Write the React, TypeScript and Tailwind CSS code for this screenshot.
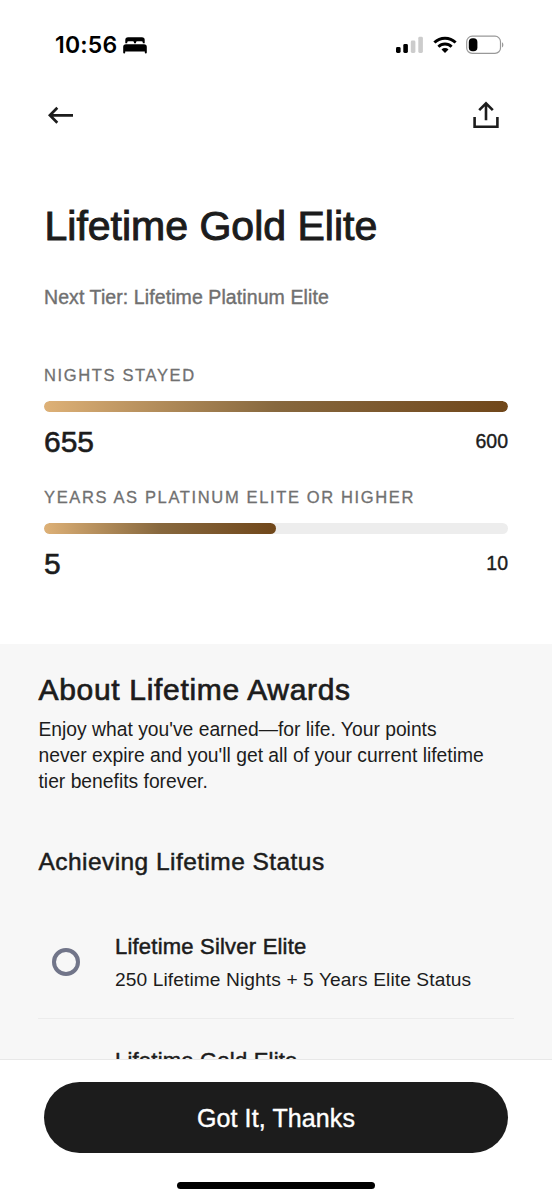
import React from 'react'

const StatusBar = () => {
  return (
    <div className="flex h-[90px] items-center justify-between pl-[55px] pr-[47px]">
      <div className="flex items-center gap-[5px] text-black">
        <span className="w-[63px] font-['Inter',sans-serif] text-[23px] leading-[26px] font-semibold tracking-[0.2px] whitespace-nowrap">10:56</span>
        <svg width="24" height="17" viewBox="0 0 24 17" fill="currentColor">
          <path d="M2.3 6.2V3A2.8 2.8 0 0 1 5.1.2h13.8A2.8 2.8 0 0 1 21.7 3v3.2h-1.900V5.600a1.400 1.400 0 0 0-1.400-1.400h-4a1.400 1.400 0 0 0-1.400 1.400v.6h-2v-.6a1.400 1.400 0 0 0-1.400-1.400h-4a1.400 1.400 0 0 0-1.400 1.400v.6z" />
          <path d="M3 7.200h18A2.800 2.800 0 0 1 23.800 10v5.500a1 1 0 0 1-2 0V14.500H2.200v1a1 1 0 0 1-2 0V10A2.800 2.800 0 0 1 3 7.200z" />
        </svg>
      </div>
      <div className="flex items-center">
        <svg width="28" height="18" viewBox="0 0 28 18">
          <rect x="0" y="11" width="4.600" height="6" rx="1.400" fill="#000" />
          <rect x="7.300" y="8" width="4.600" height="9" rx="1.400" fill="#000" />
          <rect x="14.800" y="4.500" width="4.600" height="12.500" rx="1.400" fill="#ccc" />
          <rect x="22.300" y="0.800" width="4.600" height="16.200" rx="1.400" fill="#ccc" />
        </svg>
        <svg className="ml-[9px]" width="24" height="18" viewBox="0 0 24 18" fill="none" stroke="#000">
          <path d="M1.400 6.500a15.200 15.200 0 0 1 21.200 0" strokeWidth="3" />
          <path d="M5.400 10.700a9.400 9.400 0 0 1 13.200 0" strokeWidth="2.900" />
          <path d="M12 17l-3.500-3.500a5 5 0 0 1 7 0z" fill="#000" stroke="none" />
        </svg>
        <svg className="ml-[9px]" width="39" height="20" viewBox="0 0 39 20">
          <rect x="0.700" y="1.200" width="33.800" height="17.200" rx="5.500" fill="none" stroke="#999" strokeWidth="1.200" />
          <rect x="2.800" y="3.300" width="8.600" height="13" rx="3.800" fill="#000" />
          <path d="M36 7.300c1.800.8 1.800 4.400 0 5.200z" fill="#999" />
        </svg>
      </div>
    </div>
  )
}

const NavBar = () => {
  return (
    <div className="flex h-[50px] items-center justify-between pl-12 pr-[53px] text-[#1c1c1c]">
      <button type="button" aria-label="Back">
        <svg width="26" height="18" viewBox="0 0 26 18" fill="none" stroke="currentColor" strokeWidth="2.700">
          <path d="M25 9.300H2M9.300 1.800L1.900 9.300l7.400 7.400" />
        </svg>
      </button>
      <button type="button" aria-label="Share">
        <svg width="26" height="28" viewBox="0 0 26 28" fill="none" stroke="currentColor" strokeWidth="2.600">
          <path d="M13 19.200V2M6.200 9.100L13 2.300l6.800 6.800M1.600 16v9.700h22.800V16" />
        </svg>
      </button>
    </div>
  )
}

type ProgressProps = {
  label: string
  value: number
  goal: number
}

const Progress = ({ label, value, goal }: ProgressProps) => {
  const percent = Math.min(100, (value / goal) * 100)

  return (
    <div className="h-[122px]">
      <p className="text-[16.500px] leading-5 tracking-[1.640px] text-[#707070] [-webkit-text-stroke:0.300px_#707070]">{label}</p>
      <div className="mt-4 h-[11px] overflow-hidden rounded-full bg-[#ededed]">
        <div
          className="h-full rounded-full bg-linear-to-r from-[#deb177] via-[#87683e] to-[#70471a]"
          style={{ width: `${percent}%` }}
        />
      </div>
      <div className="mt-3 flex items-center justify-between text-[#1c1c1c]">
        <span className="text-[30px] leading-9 [-webkit-text-stroke:0.600px]">{value}</span>
        <span className="-mt-[2px] text-[19.500px] leading-6 [-webkit-text-stroke:0.400px]">{goal}</span>
      </div>
    </div>
  )
}

const App = () => {
  return (
    <div className="flex h-[1200px] w-[552px] flex-col overflow-hidden bg-white font-['Liberation_Sans',Arial,sans-serif] text-[#1c1c1c]">
      <StatusBar />
      <NavBar />

      <main className="min-h-0 flex-1 overflow-hidden">
        <section className="h-[504px] px-11 pt-[61px]">
          <h1 className="pl-[0.500px] text-[41px] leading-[50px] [-webkit-text-stroke:1px]">Lifetime Gold Elite</h1>
          <p className="mt-[34px] text-[19.500px] leading-6 tracking-[0.090px] text-[#707070] [-webkit-text-stroke:0.400px]">
            Next Tier: Lifetime Platinum Elite
          </p>
          <div className="mt-[55.500px]">
            <Progress label="NIGHTS STAYED" value={655} goal={600} />
            <Progress label="YEARS AS PLATINUM ELITE OR HIGHER" value={5} goal={10} />
          </div>
        </section>

        <section className="h-[600px] bg-[#f7f7f7] px-[38px] pt-7">
          <h2 className="pl-[0.500px] text-[30px] leading-9 tracking-[0.680px] [-webkit-text-stroke:0.700px]">About Lifetime Awards</h2>
          <p className="mt-[9px] pl-[0.500px] text-[19.300px] leading-[26px]">
            Enjoy what you've earned—for life. Your points
            <br />
            never expire and you'll get all of your current lifetime
            <br />
            tier benefits forever.
          </p>
          <h3 className="mt-[52px] pl-[0.500px] text-[24.500px] leading-[30px] tracking-[0.440px] [-webkit-text-stroke:0.500px]">
            Achieving Lifetime Status
          </h3>

          <div className="mt-[37px] flex h-[105px] items-center border-b border-[#ececec]">
            <span className="ml-[14px] mt-[-8px] size-7 shrink-0 rounded-full border-4 border-[#717589]" />
            <div className="-mt-[7px] ml-[35px]">
              <h4 className="text-[22px] leading-7 tracking-[0.210px] [-webkit-text-stroke:0.500px]">Lifetime Silver Elite</h4>
              <p className="mt-[6px] text-[19.200px] leading-[26px] tracking-[0.090px]">250 Lifetime Nights + 5 Years Elite Status</p>
            </div>
          </div>
          <div className="pl-[77px] pt-[28px]">
            <h4 className="text-[22px] leading-7 tracking-[0.210px] [-webkit-text-stroke:0.500px]">Lifetime Gold Elite</h4>
          </div>
        </section>
      </main>

      <footer className="flex h-[141px] shrink-0 flex-col items-center border-t border-[#e8e8e8] bg-white px-11 pt-[22px]">
        <button
          type="button"
          className="h-[71px] w-full rounded-full bg-[#1c1c1c] text-[25px] leading-[30px] tracking-[0.120px] text-white [-webkit-text-stroke:0.400px]"
        >
          Got It, Thanks
        </button>
        <div className="mt-[29px] h-[7px] w-[198px] rounded-full bg-black" />
      </footer>
    </div>
  )
}

export default App
